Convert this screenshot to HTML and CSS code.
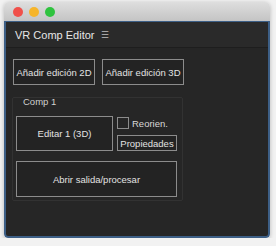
FILE: index.html
```html
<!DOCTYPE html>
<html lang="es">
<head>
    <meta charset="UTF-8">
    <title>VR Comp Editor</title>
    <link rel="stylesheet" href="styles.css">
</head>
<body>
    <div class="window">
        <div class="titlebar">
            <span class="dot red"></span>
            <span class="dot yellow"></span>
            <span class="dot green"></span>
        </div>
        <div class="panel">
            <div class="panel-header">
                <span class="panel-title">VR Comp Editor</span>
                <span class="menu-icon">&#9776;</span>
            </div>
            <div class="panel-body">
                <div class="row">
                    <button class="btn btn-add">Añadir edición 2D</button>
                    <button class="btn btn-add">Añadir edición 3D</button>
                </div>
                <div class="group">
                    <div class="group-label">Comp 1</div>
                    <div class="comp-row">
                        <button class="btn btn-edit">Editar 1 (3D)</button>
                        <div class="comp-side">
                            <label class="check"><span class="check-box"></span>Reorien.</label>
                            <button class="btn btn-small">Propiedades</button>
                        </div>
                    </div>
                    <button class="btn btn-wide">Abrir salida/procesar</button>
                </div>
            </div>
        </div>
    </div>
</body>
</html>
```

FILE: styles.css
```css
body {
    margin: 0;
    background-color: #f2f2f2;
    font-family: "Liberation Sans", Arial, sans-serif;
}
.window {
    margin: 2px 6px 0 4px;
    border-radius: 5px 5px 4px 4px;
    overflow: hidden;
    box-shadow: 0 1px 4px rgba(0,0,0,0.25);
}
.titlebar {
    height: 19px;
    background: linear-gradient(#dedede, #c4c4c4);
    display: flex;
    align-items: center;
    gap: 6px;
    padding-left: 9px;
}
.dot {
    width: 10px;
    height: 10px;
    border-radius: 50%;
}
.red { background-color: #f0504a; }
.yellow { background-color: #f6b52a; }
.green { background-color: #2fc33f; }
.panel {
    height: 214px;
    background-color: #262626;
    border: 2px solid #3d5f86;
    border-top-width: 1px;
    border-radius: 0 0 4px 4px;
}
.panel-header {
    height: 25px;
    display: flex;
    align-items: center;
    padding-left: 9px;
    background-color: #2a2a2a;
    border-bottom: 1px solid #1e1e1e;
    color: #e6e6e6;
    font-size: 11px;
}
.menu-icon {
    margin-left: 7px;
    font-size: 9px;
    color: #bbb;
}
.panel-body {
    padding: 11px 7px 0 7px;
}
.row {
    display: flex;
    gap: 7px;
}
.btn {
    background-color: #232323;
    border: 1px solid #8c8c8c;
    color: #e2e2e2;
    font-family: inherit;
    font-size: 9.5px;
    padding: 0;
}
.btn-add {
    width: 82px;
    height: 26px;
}
.group {
    width: 171px;
    margin: 12px 0 0 -1px;
    padding: 0 0 3px 3px;
    border: 1px solid #323232;
    border-radius: 2px;
    box-sizing: border-box;
}
.group-label {
    color: #d0d0d0;
    font-size: 9.5px;
    padding-left: 7px;
    margin-top: -2px;
    height: 20px;
}
.comp-row {
    display: flex;
    gap: 4px;
}
.btn-edit {
    width: 97px;
    height: 35px;
}
.comp-side {
    display: flex;
    flex-direction: column;
    gap: 6px;
    padding-top: 1px;
}
.check {
    display: flex;
    align-items: center;
    gap: 3px;
    color: #d8d8d8;
    font-size: 9.5px;
}
.check-box {
    width: 10px;
    height: 10px;
    border: 1px solid #8c8c8c;
}
.btn-small {
    width: 60px;
    height: 16px;
}
.btn-wide {
    width: 161px;
    height: 36px;
    margin-top: 10px;
}
```
